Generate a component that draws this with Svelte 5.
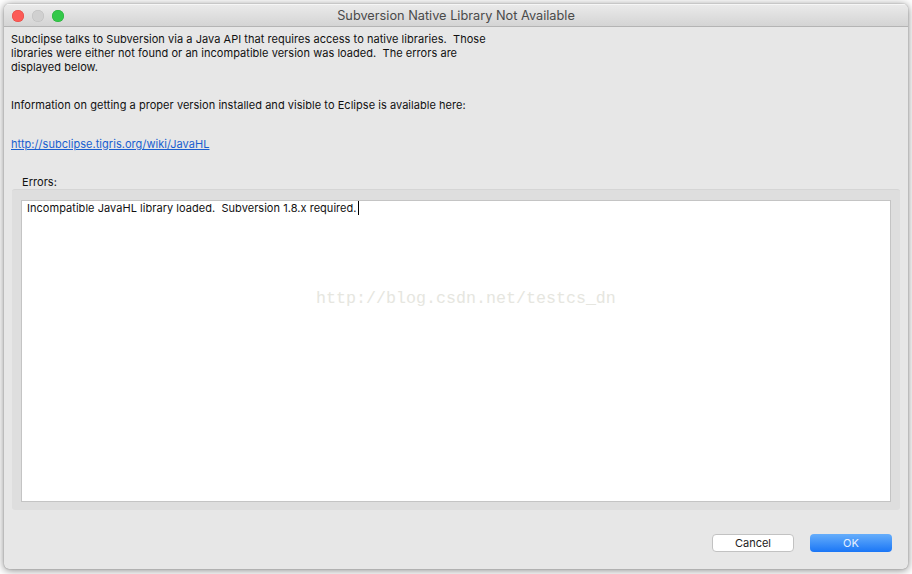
<script lang="ts">
	const intro = [
		"Subclipse talks to Subversion via a Java API that requires access to native libraries.  Those",
		"libraries were either not found or an incompatible version was loaded.  The errors are",
		"displayed below.",
	];
	const lights = ["close", "min", "max"];
</script>

<div class="stage">
	<div class="window">
		<header class="titlebar">
			<div class="lights">
				{#each lights as l}
					<span class="light {l}"></span>
				{/each}
			</div>
			<span class="title">Subversion Native Library Not Available</span>
		</header>

		<main class="body">
			<div class="intro">
				{#each intro as line}
					<p>{line}</p>
				{/each}
			</div>
			<p class="info">Information on getting a proper version installed and visible to Eclipse is available here:</p>
			<a class="link" href="#top">http://subclipse.tigris.org/wiki/JavaHL</a>

			<div class="legend">Errors:</div>
			<section class="group">
				<div class="errors">
					<span>Incompatible JavaHL library loaded.  Subversion 1.8.x required.</span><i class="caret"></i>
					<div class="mark">http://blog.csdn.net/testcs_dn</div>
				</div>
			</section>

			<footer class="actions">
				<button class="btn">Cancel</button>
				<button class="btn primary">OK</button>
			</footer>
		</main>
	</div>
</div>

<style>
	:global(body) {
		margin: 0;
		background: #fff;
	}

	.stage {
		width: 912px;
		height: 574px;
		box-sizing: border-box;
		padding: 4px 4px 5px 4px;
		overflow: hidden;
		font-family: "Inter", "Liberation Sans", sans-serif;
	}

	.window {
		height: 100%;
		display: flex;
		flex-direction: column;
		background: #e7e7e7;
		border-radius: 5px;
		box-shadow: 0 0 1px rgba(0, 0, 0, 0.45), 0 1px 8px rgba(0, 0, 0, 0.5);
		overflow: hidden;
	}

	.titlebar {
		height: 22px;
		flex: none;
		display: flex;
		align-items: center;
		justify-content: center;
		position: relative;
		background: linear-gradient(#ebebeb, #d4d4d4);
		border-bottom: 1px solid #b4b4b4;
		box-shadow: inset 0 1px 0 #f6f6f6;
	}

	.lights {
		position: absolute;
		left: 8px;
		top: 6px;
		display: flex;
		gap: 8px;
	}

	.light {
		width: 12px;
		height: 12px;
		border-radius: 50%;
	}

	.close {
		background: #fc5b57;
		box-shadow: inset 0 0 0 0.5px #e2463f;
	}

	.min {
		background: #d0d0d0;
		box-shadow: inset 0 0 0 0.5px #bdbdbd;
	}

	.max {
		background: #34c84a;
		box-shadow: inset 0 0 0 0.5px #27ae38;
	}

	.title {
		font-size: 12.75px;
		color: #4a4a4a;
	}

	.body {
		flex: 1;
		display: flex;
		flex-direction: column;
		padding: 5px 8px 0;
		font-size: 11px;
		letter-spacing: 0.04px;
		color: #111;
		white-space: pre;
	}

	.intro,
	.info {
		margin-left: -1px;
	}

	.intro p,
	.info {
		margin-top: 0;
		margin-bottom: 0;
		line-height: 14px;
	}

	.info {
		margin-top: 24px;
	}

	.link {
		margin-top: 25px;
		align-self: flex-start;
		line-height: 14px;
		color: #1a5fd0;
		text-decoration: underline;
		margin-left: -1px;
	}

	.legend {
		margin: 24px 0 0 10px;
		line-height: 14px;
	}

	.group {
		flex: none;
		height: 321px;
		box-sizing: border-box;
		padding: 10px 9px 8px;
		background: #dedede;
		border-top: 1px solid #d5d5d5;
		border-radius: 3px;
	}

	.errors {
		position: relative;
		height: 100%;
		box-sizing: border-box;
		padding: 0 5px;
		background: #fff;
		border: 1px solid #c4c4c4;
		line-height: 14px;
	}

	.caret {
		display: inline-block;
		width: 1px;
		height: 14px;
		margin-left: 1px;
		vertical-align: top;
		background: #000;
	}

	.mark {
		position: absolute;
		left: 294px;
		top: 88px;
		font-family: "Liberation Mono", monospace;
		font-size: 16.67px;
		letter-spacing: 0;
		line-height: 20px;
		color: #e6e6e0;
	}

	.actions {
		display: flex;
		justify-content: flex-end;
		gap: 16px;
		margin-top: 24px;
		padding-right: 8px;
	}

	.btn {
		width: 82px;
		height: 18px;
		padding: 0;
		box-sizing: border-box;
		font: inherit;
		font-size: 11px;
		color: #222;
		background: #fff;
		border: 1px solid #c2c2c2;
		border-radius: 4px;
	}

	.primary {
		color: #e6f0ff;
		background: linear-gradient(#66aefb, #1a76f6);
		border: none;
	}
</style>
